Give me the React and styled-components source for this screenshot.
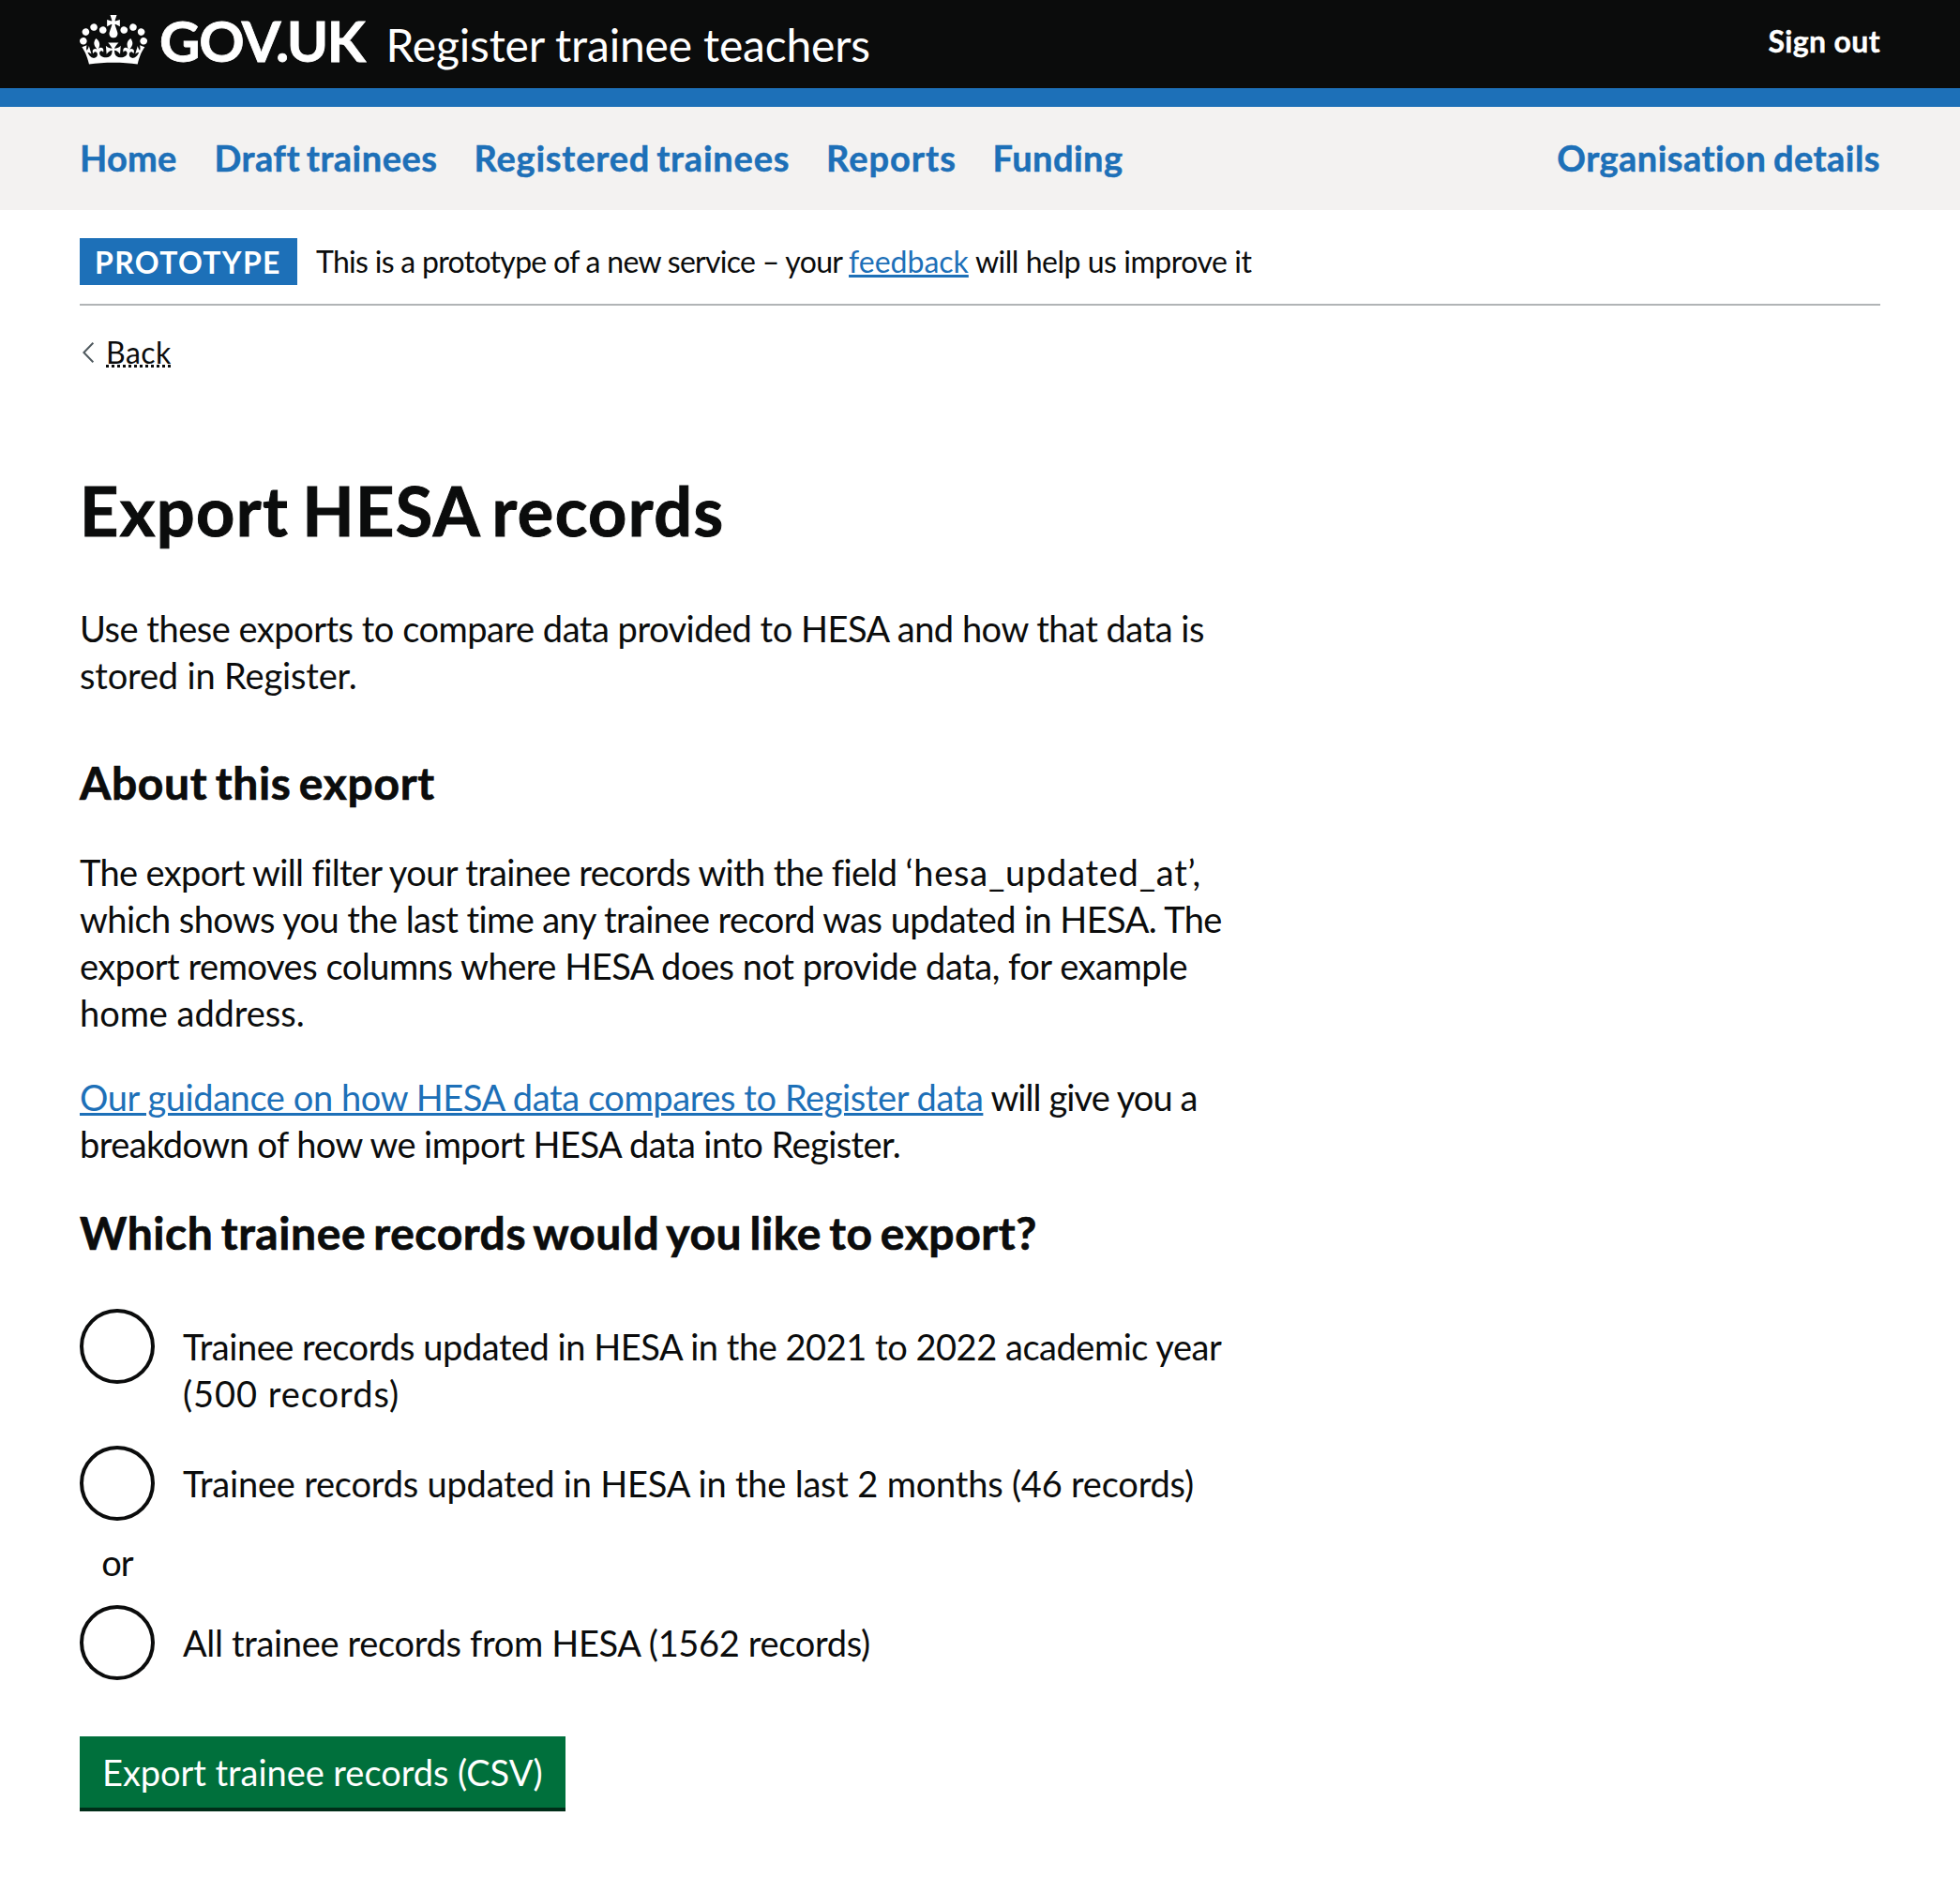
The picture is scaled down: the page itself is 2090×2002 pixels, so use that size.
import React from 'react';
import styled, { createGlobalStyle } from 'styled-components';

const ink = '#0b0c0c';
const blue = '#1d70b8';

const GlobalStyle = createGlobalStyle`
  *, *::before, *::after { box-sizing: border-box; }
  body {
    margin: 0;
    background: #fff;
    color: ${ink};
    font-family: Lato, "Liberation Sans", sans-serif;
    font-variant-ligatures: none;
  }
`;

const Page = styled.div`
  width: 100%;
  min-height: 2002px;
`;

const Container = styled.div`
  width: 1920px;
  margin: 0 auto;
`;

const Header = styled.header`
  height: 114px;
  background: ${ink};
  border-bottom: 20px solid ${blue};
  color: #fff;
`;

const HeaderRow = styled(Container)`
  display: flex;
  align-items: baseline;
  padding-top: 13px;
`;

const Crown = styled.svg`
  align-self: flex-start;
  width: 72px;
  height: 53px;
  margin: 2.5px 13px 0 0;
  flex: none;
`;

const Logotype = styled.span`
  width: 241.5px;
  font-size: 60px;
  font-weight: 700;
  line-height: 60px;
  letter-spacing: -1.4px;
  -webkit-text-stroke: 0.8px currentColor;
`;

const ServiceName = styled.span`
  font-size: 48px;
  line-height: 60px;
  letter-spacing: -0.19px;
`;

const SignOut = styled.a`
  align-self: flex-start;
  margin: 11px 0 0 auto;
  font-size: 32px;
  font-weight: 700;
  line-height: 40px;
  letter-spacing: 0.35px;
  -webkit-text-stroke: 0.4px currentColor;
`;

const Nav = styled.nav`
  height: 110px;
  background: #f3f2f1;
`;

const NavRow = styled(Container)`
  display: flex;
  gap: 40px;
  padding-top: 29px;
`;

const NavLink = styled.a`
  width: ${(p) => (p.$width ? `${p.$width}px` : 'auto')};
  margin-left: ${(p) => (p.$end ? 'auto' : '0')};
  color: ${blue};
  font-size: 38px;
  font-weight: 700;
  line-height: 50px;
  letter-spacing: ${(p) => p.$track}px;
  word-spacing: ${(p) => p.$space || 0}px;
  white-space: nowrap;
  -webkit-text-stroke: 0.5px currentColor;
`;

const PhaseBanner = styled.div`
  display: flex;
  height: 102px;
  padding-top: 30px;
  border-bottom: 2px solid #b1b4b6;
`;

const Tag = styled.strong`
  width: 232px;
  height: 50px;
  padding-left: 16px;
  background: ${blue};
  color: #fff;
  font-size: 32px;
  line-height: 52px;
  letter-spacing: 1.33px;
`;

const PhaseText = styled.span`
  margin-left: 20px;
  font-size: 32px;
  line-height: 49px;
  letter-spacing: -0.7px;
  white-space: nowrap;
`;

const Link = styled.a`
  color: ${blue};
  letter-spacing: ${(p) => p.$track}px;
  text-decoration: underline;
  text-decoration-thickness: 3px;
  text-underline-offset: 2px;
`;

const BackLink = styled.a`
  display: flex;
  width: 98px;
  margin-top: 29px;
`;

const Chevron = styled.svg`
  width: 12px;
  height: 22px;
  margin: 10px 13px 0 3px;
  flex: none;
`;

const BackText = styled.span`
  height: 39px;
  font-size: 32px;
  line-height: 41px;
  letter-spacing: 0.5px;
  background: repeating-linear-gradient(to right, ${ink} 0 3px, transparent 3px 6px) 0 34px / 100% 3px no-repeat;
`;

const Main = styled.main`
  padding-top: 110px;
`;

const Title = styled.h1`
  margin: 0 0 61px;
  font-size: 72px;
  font-weight: 700;
  line-height: 80px;
  letter-spacing: 1.4px;
  word-spacing: -5px;
  -webkit-text-stroke: 1px currentColor;
`;

const Heading = styled.h2`
  margin: ${(p) => p.$before}px 0 ${(p) => p.$after}px;
  font-size: 48px;
  font-weight: 700;
  line-height: 61px;
  letter-spacing: ${(p) => p.$track}px;
  word-spacing: -4px;
  -webkit-text-stroke: 0.7px currentColor;
`;

const Paragraph = styled.p`
  margin: 0 0 ${(p) => p.$after ?? 40}px;
  font-size: 38px;
  line-height: 50px;
`;

const Line = styled.span`
  display: block;
  letter-spacing: ${(p) => p.$track}px;
  white-space: nowrap;
`;

const Tracked = styled.span`
  letter-spacing: ${(p) => p.$track}px;
`;

const Radios = styled.div`
  display: flex;
  flex-direction: column;
  font-size: 38px;
  line-height: 50px;
`;

const Radio = styled.label`
  display: flex;
  gap: 30px;
  margin-bottom: ${(p) => p.$after}px;
`;

const Circle = styled.span`
  width: 80px;
  height: 80px;
  border: 4px solid ${ink};
  border-radius: 50%;
  flex: none;
`;

const RadioText = styled.span`
  padding-top: 15px;
`;

const Divider = styled.div`
  width: 80px;
  margin-bottom: 21px;
  text-align: center;
  letter-spacing: -1px;
`;

const Button = styled.button`
  display: block;
  width: 518px;
  height: 76px;
  margin: 60px 0 0;
  padding: 0 0 0 24px;
  border: 0;
  background: #00703c;
  box-shadow: 0 4px 0 #002d18;
  color: #fff;
  font: 400 38px/50px Lato, "Liberation Sans", sans-serif;
  letter-spacing: -0.05px;
  text-align: left;
`;

const crownPath =
  'M25 30.2c3.5 1.5 7.7-.2 9.1-3.7 1.5-3.6-.2-7.8-3.9-9.2-3.6-1.4-7.6.3-9.1 3.9-1.4 3.5.3 7.5 3.9 9zM9 39.5c3.6 1.5 7.8-.2 9.2-3.7 1.5-3.6-.2-7.8-3.9-9.1-3.6-1.5-7.6.2-9.1 3.8-1.4 3.5.3 7.5 3.8 9zM4.4 57.2c3.5 1.5 7.7-.2 9.1-3.8 1.5-3.6-.2-7.7-3.9-9.1-3.5-1.5-7.6.3-9.1 3.8-1.4 3.5.3 7.6 3.9 9.1zm38.3-21.4c3.5 1.5 7.7-.2 9.1-3.8 1.5-3.6-.2-7.7-3.9-9.1-3.6-1.5-7.6.3-9.1 3.8-1.3 3.6.4 7.7 3.9 9.1zm64.4-5.6c-3.6 1.5-7.8-.2-9.1-3.7-1.5-3.6.2-7.8 3.8-9.2 3.6-1.4 7.7.3 9.2 3.9 1.3 3.5-.4 7.5-3.9 9zm15.9 9.3c-3.6 1.5-7.7-.2-9.1-3.7-1.5-3.6.2-7.8 3.7-9.1 3.6-1.5 7.7.2 9.2 3.8 1.5 3.5-.3 7.5-3.8 9zm4.7 17.7c-3.6 1.5-7.8-.2-9.2-3.8-1.5-3.6.2-7.7 3.9-9.1 3.6-1.5 7.7.3 9.2 3.8 1.3 3.5-.4 7.6-3.9 9.1zM89.3 35.8c-3.6 1.5-7.8-.2-9.2-3.8-1.4-3.6.2-7.7 3.9-9.1 3.6-1.5 7.7.3 9.2 3.8 1.4 3.6-.3 7.7-3.9 9.1zM69.7 17.7l8.9 4.7V9.3l-8.9 2.8c-.2-.3-.5-.6-.9-.9L72.4 0H59.6l3.5 11.2c-.3.3-.6.5-.9.9l-8.8-2.8v13.1l8.8-4.7c.3.3.6.7.9.9l-5 15.4v.1c-.2.8-.4 1.6-.4 2.4 0 4.1 3.1 7.5 7 8.1h.2c.3 0 .7.1 1 .1.4 0 .7 0 1-.1h.2c4-.6 7.1-4.1 7.1-8.1 0-.8-.1-1.7-.4-2.4V34l-5.1-15.4c.4-.2.7-.6 1-.9zM66 92.8c16.9 0 32.8 1.1 47.1 3.2 4-16.9 8.9-26.7 14-33.5l-9.6-3.4c1 4.9 1.1 7.2 0 10.2-1.5-1.4-3-4.3-4.2-8.7L108.6 76c2.8-2 5-3.2 7.5-3.3-4.4 9.4-10 11.9-13.6 11.2-4.3-.8-6.3-4.6-5.6-7.9 1-4.7 5.7-5.9 8-.5 4.3-8.7-3-11.4-7.6-8.8 7.1-7.2 7.9-13.5 2.1-21.1-8 6.1-8.1 12.3-4.5 20.8-4.7-5.4-12.1-2.5-9.5 6.2 3.4-5.2 7.9-2 7.2 3.1-.6 4.3-6.4 7.8-13.5 7.2-10.3-.9-10.9-8-11.2-13.8 2.5-.5 7.1 1.8 11 7.3L80.2 60c-4.1 4.4-8 5.3-12.3 5.4 1.4-4.4 8-11.6 8-11.6H55.5s6.4 7.2 7.9 11.6c-4.2-.1-8-1-12.3-5.4l1.4 16.4c3.9-5.5 8.5-7.7 10.9-7.3-.3 5.8-.9 12.8-11.1 13.8-7.2.6-12.9-2.9-13.5-7.2-.7-5 3.8-8.3 7.1-3.1 2.7-8.7-4.6-11.6-9.4-6.2 3.7-8.5 3.6-14.7-4.6-20.8-5.8 7.6-5 13.9 2.2 21.1-4.7-2.6-11.9.1-7.7 8.8 2.3-5.5 7.1-4.2 8.1.5.7 3.3-1.3 7.1-5.7 7.9-3.5.7-9-1.8-13.5-11.2 2.5.1 4.7 1.3 7.5 3.3l-4.7-15.4c-1.2 4.4-2.7 7.2-4.3 8.7-1.1-3-.9-5.3 0-10.2l-9.5 3.4c5 6.9 9.9 16.7 14 33.5 14.8-2.1 30.8-3.2 47.7-3.2z';

const navItems = [
  { label: 'Home', width: 103.5, track: 0.22 },
  { label: 'Draft trainees', width: 237, track: 0.48, space: -3 },
  { label: 'Registered trainees', width: 335.5, track: 0.8, space: -3 },
  { label: 'Reports', width: 137.5, track: 1 },
  { label: 'Funding', width: 140, track: 0.45 },
];

export default function App() {
  return (
    <Page>
      <GlobalStyle />
      <Header>
        <HeaderRow>
          <Crown viewBox="0 0 132 97" preserveAspectRatio="none" fill="#fff" aria-hidden="true">
            <path d={crownPath} />
          </Crown>
          <Logotype>GOV.UK</Logotype>
          <ServiceName>Register trainee teachers</ServiceName>
          <SignOut>Sign out</SignOut>
        </HeaderRow>
      </Header>
      <Nav>
        <NavRow>
          {navItems.map((item) => (
            <NavLink key={item.label} $width={item.width} $track={item.track} $space={item.space}>
              {item.label}
            </NavLink>
          ))}
          <NavLink $end $track={0.45} $space={-2}>Organisation details</NavLink>
        </NavRow>
      </Nav>
      <Container>
        <PhaseBanner>
          <Tag>PROTOTYPE</Tag>
          <PhaseText>
            This is a prototype of a new service – your <Link $track={0}>feedback</Link>
            <Tracked $track={-0.47}> will help us improve it</Tracked>
          </PhaseText>
        </PhaseBanner>
        <BackLink>
          <Chevron viewBox="0 0 12 22" fill="none" stroke="#505a5f" strokeWidth="2" aria-hidden="true">
            <path d="M11.3 0.7L1.4 11l9.9 10.3" />
          </Chevron>
          <BackText>Back</BackText>
        </BackLink>
        <Main>
          <Title>Export HESA records</Title>
          <Paragraph>
            <Line $track={-0.49}>Use these exports to compare data provided to HESA and how that data is</Line>
            <Line $track={-0.16}>stored in Register.</Line>
          </Paragraph>
          <Heading $before={59} $after={40} $track={0.66}>About this export</Heading>
          <Paragraph>
            <Line $track={-0.64}>
              The export will filter your trainee records with the field{' '}
              <Tracked $track={0.75}>‘hesa_updated_at’,</Tracked>
            </Line>
            <Line $track={-0.58}>which shows you the last time any trainee record was updated in HESA. The</Line>
            <Line $track={-0.47}>export removes columns where HESA does not provide data, for example</Line>
            <Line $track={-0.05}>home address.</Line>
          </Paragraph>
          <Paragraph $after={39}>
            <Line $track={-0.92}>
              <Link $track={-0.41}>Our guidance on how HESA data compares to Register data</Link> will give you a
            </Line>
            <Line $track={-0.56}>breakdown of how we import HESA data into Register.</Line>
          </Paragraph>
          <Heading $before={39} $after={51} $track={0.58}>Which trainee records would you like to export?</Heading>
          <Radios>
            <Radio $after={31}>
              <Circle />
              <RadioText>
                <Line $track={-0.47}>Trainee records updated in HESA in the 2021 to 2022 academic year</Line>
                <Line $track={0.96}>(500 records)</Line>
              </RadioText>
            </Radio>
            <Radio $after={19}>
              <Circle />
              <RadioText>
                <Line $track={-0.21}>Trainee records updated in HESA in the last 2 months (46 records)</Line>
              </RadioText>
            </Radio>
            <Divider>or</Divider>
            <Radio $after={0}>
              <Circle />
              <RadioText>
                <Line $track={-0.33}>All trainee records from HESA (1562 records)</Line>
              </RadioText>
            </Radio>
          </Radios>
          <Button>Export trainee records (CSV)</Button>
        </Main>
      </Container>
    </Page>
  );
}
